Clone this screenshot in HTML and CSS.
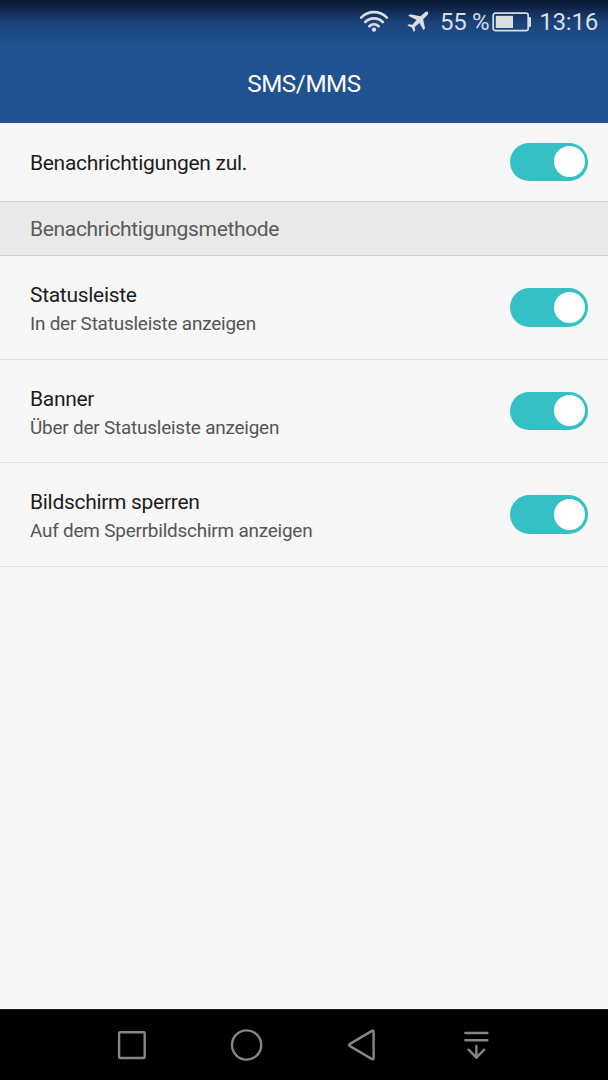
FILE: index.html
```html
<!DOCTYPE html>
<html lang="de">
<head>
    <meta charset="UTF-8">
    <meta name="viewport" content="width=device-width, initial-scale=1.0">
    <title>SMS/MMS</title>
    <link rel="stylesheet" href="styles.css">
</head>
<body>
    <header>
        <div class="status-bar">
            <svg class="wifi" width="30" height="24" viewBox="0 0 30 24" fill="none" stroke="currentColor" stroke-width="2.7" stroke-linecap="round">
                <path d="M2.2 7.6C9.2 .4 20.8 .4 27.8 7.6"/>
                <path d="M6.3 12C11.2 7.2 18.8 7.2 23.7 12"/>
                <path d="M10.3 16.2C13 13.7 17 13.7 19.7 16.2"/>
                <circle cx="15" cy="19.6" r="2.2" fill="currentColor" stroke="none"/>
            </svg>
            <svg class="plane" width="22" height="22" viewBox="0 0 22 22" fill="currentColor">
                <path d="M20.8 1C20 .3 18.7.6 17.8 1.4L13.5 5.3 3 3.2 1.3 4.8 9.6 8.9 5.3 13.8 1.7 13.3.4 14.5 4.8 16.6 6.9 20.9 8.2 19.6 7.7 16.1 12.5 12 16.4 18.9 18 17.4 16.2 8.3 20.5 4.1C21.3 3.3 21.5 1.8 20.8 1Z"/>
            </svg>
            <span class="percent">55 %</span>
            <svg class="battery" width="40" height="20" viewBox="0 0 40 20">
                <rect x="1.2" y="1.2" width="35" height="17.4" rx="2.2" fill="none" stroke="currentColor" stroke-width="1.7"/>
                <rect x="3.8" y="3.8" width="17.2" height="12.2" fill="currentColor"/>
                <path d="M37 5h.8q1.2 0 1.2 1.2v7.6q0 1.2-1.2 1.2H37z" fill="currentColor"/>
            </svg>
            <span class="time">13:16</span>
        </div>
        <h1>SMS/MMS</h1>
    </header>
    <main>
        <div class="row row-single">
            <div class="row-title">Benachrichtigungen zul.</div>
            <div class="switch"></div>
        </div>
        <h2>Benachrichtigungsmethode</h2>
        <div class="row">
            <div class="row-text">
                <div class="row-title">Statusleiste</div>
                <div class="row-desc">In der Statusleiste anzeigen</div>
            </div>
            <div class="switch"></div>
        </div>
        <div class="row">
            <div class="row-text">
                <div class="row-title">Banner</div>
                <div class="row-desc">Über der Statusleiste anzeigen</div>
            </div>
            <div class="switch"></div>
        </div>
        <div class="row">
            <div class="row-text">
                <div class="row-title">Bildschirm sperren</div>
                <div class="row-desc">Auf dem Sperrbildschirm anzeigen</div>
            </div>
            <div class="switch"></div>
        </div>
    </main>
    <nav>
        <svg width="36" height="36" viewBox="0 0 36 36"><rect x="5.1" y="5.2" width="25.6" height="25.8" rx="1"/></svg>
        <svg width="36" height="36" viewBox="0 0 36 36"><circle cx="17.6" cy="18" r="14.6"/></svg>
        <svg width="36" height="36" viewBox="0 0 36 36"><path d="M5.6 17.1Q4.6 18 5.6 18.9L28 32.1Q29.6 32.8 29.6 31.2V4.8Q29.6 3.2 28 3.9Z"/></svg>
        <svg width="36" height="36" viewBox="0 0 36 36"><path d="M6.4 6H28.4M6.4 13.3H28.4M17.4 19V30.7M9.6 22.7 17.4 30.7 25.2 22.7"/></svg>
    </nav>
</body>
</html>
```

FILE: styles.css
```css
* { box-sizing: border-box; }
body { font-family: Roboto, sans-serif; margin: 0; height: 1080px; background: #f7f7f7; display: flex; flex-direction: column; overflow: hidden; }
header { height: 123px; color: #fff; background: linear-gradient(#0c1c38 0, #0d1f3e 5px, #1b427a 22px, #205190 44px); }
.status-bar { height: 44px; padding-right: 10px; display: flex; align-items: center; justify-content: flex-end; color: #dadde1; font-size: 24.2px; letter-spacing: -0.3px; }
.wifi { margin-right: 18px; }
.plane { margin-right: 11px; }
.percent { font-size: 24px; }
.battery { margin-left: 3px; margin-right: 7px; }
h1 { margin: 0; height: 79px; line-height: 80px; text-align: center; font-size: 24.2px; letter-spacing: -0.4px; font-weight: 400; }
main { flex: 1; }
.row { height: 103.5px; padding: 0 20px 0 30px; display: flex; align-items: center; justify-content: space-between; border-bottom: 1px solid #e0e1e1; }
.row-single { height: 78px; border-bottom: none; }
.row-single .row-title { padding-top: 2px; }
.row-text { padding-top: 4px; }
.row-title { font-size: 21px; line-height: 30px; letter-spacing: -0.3px; color: #1c1c1c; }
.row-desc { font-size: 18.9px; line-height: 28px; letter-spacing: -0.2px; color: #555; }
h2 { margin: 0; height: 55px; padding-left: 30px; line-height: 55px; font-size: 21px; letter-spacing: -0.33px; font-weight: 400; color: #5a5a5a; background: #e9e9e9; border-top: 1px solid #cfcfcf; border-bottom: 1px solid #cfcfcf; }
.switch { width: 78px; height: 38.5px; padding: 3.5px; border-radius: 20px; background: #35c0c6; display: flex; justify-content: flex-end; }
.switch::after { content: ""; width: 31px; height: 31px; border-radius: 50%; background: #fff; }
nav { height: 71px; padding: 0 113.5px; display: flex; align-items: center; justify-content: space-between; background: #000; border-top: 1px solid #1c1c1c; }
nav svg { fill: none; stroke: #858585; stroke-width: 2.4; stroke-linecap: round; stroke-linejoin: round; }
```
